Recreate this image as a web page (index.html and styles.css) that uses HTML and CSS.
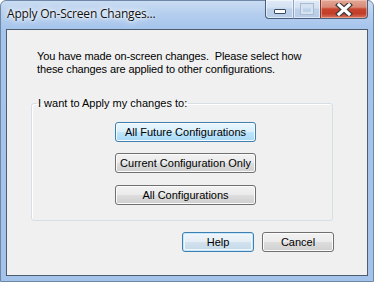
FILE: index.html
```html
<!DOCTYPE html>
<html>
<head>
<meta charset="utf-8">
<link rel="stylesheet" href="styles.css">
</head>
<body>
<div class="window">
  <div class="titlebar">
    <div class="title">Apply On-Screen Changes...</div>
    <div class="caption">
      <div class="cbtn min"><span class="min-glyph"></span></div>
      <div class="cbtn max"><span class="max-glyph"></span></div>
      <div class="cbtn close">
        <svg width="18" height="13" viewBox="0 0 18 13">
          <path d="M4 2 L14 11 M14 2 L4 11" stroke="#3a3a3a" stroke-width="5.5" stroke-linecap="square" fill="none"/>
          <path d="M4 2 L14 11 M14 2 L4 11" stroke="#ffffff" stroke-width="3.2" stroke-linecap="square" fill="none"/>
        </svg>
      </div>
    </div>
  </div>
  <div class="client">
    <p class="msg">You have made on-screen changes.&nbsp; Please select how<br>these changes are applied to other configurations.</p>
    <fieldset class="group">
      <legend class="group-label">I want to Apply my changes to:</legend>
      <div class="choices">
        <button class="btn btn-hot wide">All Future Configurations</button>
        <button class="btn wide">Current Configuration Only</button>
        <button class="btn wide last">All Configurations</button>
      </div>
    </fieldset>
    <div class="actions">
      <button class="btn btn-default small">Help</button>
      <button class="btn small">Cancel</button>
    </div>
  </div>
</div>
</body>
</html>
```

FILE: styles.css
```css
html, body {
  margin: 0;
  padding: 0;
  background: #ffffff;
}

.window {
  box-sizing: border-box;
  width: 374px;
  height: 282px;
  border: 1px solid #6f87a6;
  border-radius: 6px 6px 0 0;
  padding: 0 5px 5px;
  display: flex;
  flex-direction: column;
  background: linear-gradient(to bottom, #c9dcf2 0px, #b3cdee 14px, #a6c5ec 28px, #a3c3eb 100%);
  font-family: "Liberation Sans", Arial, sans-serif;
}

.titlebar {
  height: 28px;
  display: flex;
  align-items: flex-start;
  justify-content: space-between;
}

.title {
  font-family: "Open Sans", "Noto Sans", sans-serif;
  font-size: 12px;
  line-height: 15px;
  padding: 5px 0 0 1px;
  color: #111111;
  text-shadow: 0 0 6px #ffffff, 0 0 10px #ffffff, 0 0 3px #ffffff;
  letter-spacing: -0.2px;
}

.caption {
  display: flex;
  height: 19px;
  margin-top: -1px;
}

.cbtn {
  box-sizing: border-box;
  height: 19px;
  display: flex;
  align-items: center;
  justify-content: center;
  border: 1px solid #4a5e7e;
  border-top: none;
}

.min {
  width: 28px;
  border-radius: 0 0 0 4px;
  border-right: none;
  background: linear-gradient(to bottom, #e1ebf7 0%, #d1e0f2 45%, #bdd1ea 50%, #b7cce8 100%);
  box-shadow: inset 0 0 0 1px rgba(255,255,255,0.55);
}

.max {
  width: 27px;
  border-left: 1px solid #8ea4c2;
  border-right: none;
  background: linear-gradient(to bottom, #e1ebf7 0%, #d1e0f2 45%, #bdd1ea 50%, #b7cce8 100%);
  box-shadow: inset 0 0 0 1px rgba(255,255,255,0.55);
}

.close {
  width: 48px;
  border-radius: 0 0 4px 0;
  border-left: 1px solid #7a3a30;
  background: linear-gradient(to bottom, #e3a797 0%, #d98a76 40%, #c9452f 50%, #c13d28 75%, #d7735b 100%);
  box-shadow: inset 0 0 0 1px rgba(255,220,210,0.45);
}

.min-glyph {
  display: block;
  width: 10px;
  height: 3px;
  margin-top: 5px;
  background: #ffffff;
  border: 1px solid #3a4a60;
  border-radius: 1px;
}

.max-glyph {
  display: block;
  width: 8px;
  height: 6px;
  border: 2px solid #d7e2f0;
  outline: 1px solid #a8b9d0;
  margin-top: -1px;
}

.client {
  flex: 1;
  box-sizing: border-box;
  background: #f0f0f0;
  border: 1px solid #4d5c6e;
  padding: 20px 33px 0 24px;
  display: flex;
  flex-direction: column;
  font-size: 11px;
  line-height: 13px;
  color: #000000;
}

.msg {
  margin: 0 0 0 6px;
  white-space: nowrap;
  letter-spacing: -0.12px;
}

.group {
  margin: 21px 0 0 0;
  width: 302px;
  box-sizing: border-box;
  border: 1px solid #d5dfe5;
  border-radius: 3px;
  padding: 12px 0 15px 0;
  min-width: 0;
  box-shadow: inset 1px 1px 0 #ffffff;
}

.group-label {
  padding: 0 1px;
  margin-left: 5px;
  font-size: 11px;
  line-height: 13px;
}

.choices {
  display: flex;
  flex-direction: column;
  align-items: flex-start;
  gap: 11px;
  padding-left: 83px;
}

.btn {
  box-sizing: border-box;
  height: 20px;
  margin: 0;
  padding: 0;
  white-space: nowrap;
  font-family: "Liberation Sans", Arial, sans-serif;
  font-size: 11px;
  line-height: 16px;
  color: #000000;
  border: 1px solid #707070;
  border-radius: 3px;
  background: linear-gradient(to bottom, #f2f2f2 0%, #ebebeb 48%, #dddddd 52%, #cfcfcf 100%);
  box-shadow: inset 0 0 0 1px #fbfbfb;
}

.btn-hot {
  border-color: #3c7fb1;
  background: linear-gradient(to bottom, #eaf6fd 0%, #d9f0fc 48%, #bee6fd 52%, #a7d9f5 100%);
}

.btn-default {
  border-color: #3c7fb1;
  background: linear-gradient(to bottom, #f0f6fa 0%, #e5eef5 48%, #d2e2ee 52%, #c5d9e8 100%);
  box-shadow: inset 0 0 0 1px #c8e6f8, inset 0 0 0 2px #eef7fd;
}

.wide {
  width: 141px;
}

.last {
  margin-top: 1px;
}

.actions {
  display: flex;
  justify-content: flex-end;
  gap: 8px;
  margin-top: 11px;
}

.small {
  width: 72px;
}
```
